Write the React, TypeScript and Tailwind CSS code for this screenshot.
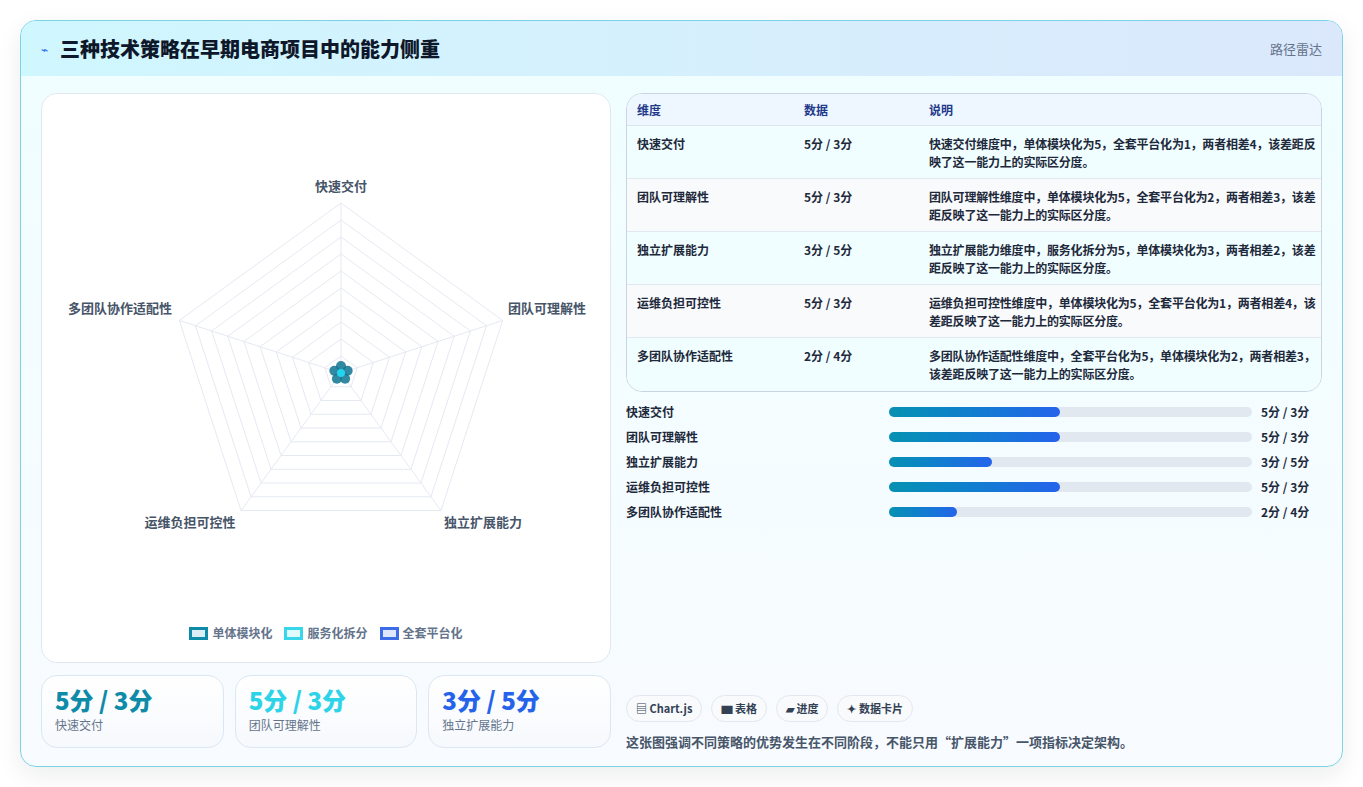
import React from "react";

const rows = [
  { k: "快速交付", v: "5分 / 3分", d: "快速交付维度中，单体模块化为5，全套平台化为1，两者相差4，该差距反映了这一能力上的实际区分度。", w: 47 },
  { k: "团队可理解性", v: "5分 / 3分", d: "团队可理解性维度中，单体模块化为5，全套平台化为2，两者相差3，该差距反映了这一能力上的实际区分度。", w: 47 },
  { k: "独立扩展能力", v: "3分 / 5分", d: "独立扩展能力维度中，服务化拆分为5，单体模块化为3，两者相差2，该差距反映了这一能力上的实际区分度。", w: 28.3 },
  { k: "运维负担可控性", v: "5分 / 3分", d: "运维负担可控性维度中，单体模块化为5，全套平台化为1，两者相差4，该差距反映了这一能力上的实际区分度。", w: 47 },
  { k: "多团队协作适配性", v: "2分 / 4分", d: "多团队协作适配性维度中，全套平台化为5，单体模块化为2，两者相差3，该差距反映了这一能力上的实际区分度。", w: 18.7 },
];

function Radar() {
  const cx = 299, cy = 279, R = 170;
  const pt = (i: number, r: number) => {
    const a = -Math.PI / 2 + (i * 2 * Math.PI) / 5;
    return [cx + r * Math.cos(a), cy + r * Math.sin(a)];
  };
  const rings = Array.from({ length: 10 }, (_, j) => ((j + 1) * R) / 10);
  const poly = (r: number) => [0, 1, 2, 3, 4].map((i) => pt(i, r).join(",")).join(" ");
  const labels = ["快速交付", "团队可理解性", "独立扩展能力", "运维负担可控性", "多团队协作适配性"];
  const lp = [
    [cx, 97, "middle"],
    [466, 219, "start"],
    [441, 433, "middle"],
    [148, 433, "middle"],
    [78, 219, "middle"],
  ] as const;
  return (
    <svg width="570" height="530" className="block">
      {rings.map((r) => (
        <polygon key={r} points={poly(r)} fill="none" stroke="#e5e9f2" strokeWidth="1" />
      ))}
      {[0, 1, 2, 3, 4].map((i) => {
        const [x, y] = pt(i, R);
        return <line key={i} x1={cx} y1={cy} x2={x} y2={y} stroke="#e5e9f2" />;
      })}
      {[0, 1, 2, 3, 4].map((i) => {
        const [x, y] = pt(i, 7);
        return <circle key={i} cx={x} cy={y} r="5" fill="#0e7490" opacity="0.85" />;
      })}
      <circle cx={cx} cy={cy} r="4" fill="#22d3ee" />
      {labels.map((l, i) => (
        <text key={l} x={lp[i][0]} y={lp[i][1]} textAnchor={lp[i][2]} fontSize="13" fontWeight="700" fill="#475569">
          {l}
        </text>
      ))}
    </svg>
  );
}

export default function App() {
  return (
    <div className="min-h-[787px] w-[1363px] bg-white p-5" style={{ fontFamily: '"Noto Sans CJK SC", "Noto Sans", sans-serif' }}>
      <div className="h-[747px] rounded-2xl border border-[#7dd3e6] overflow-hidden bg-gradient-to-b from-[#effeff] to-[#f8fbff] shadow-[0_8px_24px_rgba(15,23,42,0.08)]">
        <div className="h-[55px] flex items-center justify-between px-5 bg-gradient-to-r from-[#cff7fe] to-[#dbe8fc]">
          <div className="flex items-center gap-3">
            <span className="text-[#2563eb] text-xs">⌁</span>
            <span className="text-[20px] font-black text-[#0f172a]">三种技术策略在早期电商项目中的能力侧重</span>
          </div>
          <span className="text-[13px] text-[#64748b]">路径雷达</span>
        </div>
        <div className="flex gap-[15px] px-5 pt-[17px]">
          <div className="w-[570px] flex flex-col gap-[12px]">
            <div className="h-[570px] rounded-2xl border border-[#e2e8f0] bg-white flex flex-col">
              <Radar />
              <div className="flex justify-center gap-3 text-[12px] font-bold text-[#64748b]">
                <span className="flex items-center gap-1"><span className="w-[19px] h-[13px] border-[3px] border-[#0e8ba8] bg-[#dbeef5]" />单体模块化</span>
                <span className="flex items-center gap-1"><span className="w-[19px] h-[13px] border-[3px] border-[#38d6ea] bg-[#e0fbfd]" />服务化拆分</span>
                <span className="flex items-center gap-1"><span className="w-[19px] h-[13px] border-[3px] border-[#3b6ee6] bg-[#dde7fd]" />全套平台化</span>
              </div>
            </div>
            <div className="grid grid-cols-3 gap-[11px]">
              {[
                ["5分 / 3分", "text-[#0e8ba8]", "快速交付"],
                ["5分 / 3分", "text-[#2dd4e8]", "团队可理解性"],
                ["3分 / 5分", "text-[#2563eb]", "独立扩展能力"],
              ].map(([v, c, l]) => (
                <div key={l} className="h-[73px] rounded-2xl border border-[#dbe7f3] bg-gradient-to-b from-white to-[#f6f9fd] px-[13px] pt-[8px]">
                  <div className={`text-[24px] font-black leading-[32px] ${c}`}>{v}</div>
                  <div className="text-[12px] text-[#64748b]">{l}</div>
                </div>
              ))}
            </div>
          </div>
          <div className="flex-1 flex flex-col">
            <div className="rounded-2xl border border-[#cbd5e1] overflow-hidden bg-white">
              <div className="grid grid-cols-[167px_125px_1fr] h-[32px] items-center bg-[#eef6ff] text-[12px] font-bold text-[#1e3a8a] px-[10px] border-b border-[#dbe4ef]">
                <span>维度</span><span>数据</span><span>说明</span>
              </div>
              {rows.map((r, i) => (
                <div key={r.k} className={`grid grid-cols-[167px_125px_1fr] h-[53px] pt-[9px] text-[12px] font-semibold text-[#1e293b] pl-[10px] pr-[4px] ${i < 4 ? "border-b border-[#e2e8f0]" : ""} ${i % 2 ? "bg-[#f8fafc]" : "bg-[#f0feff]"}`}>
                  <span>{r.k}</span><span>{r.v}</span><span className="leading-[18px] tracking-[-0.2px]">{r.d}</span>
                </div>
              ))}
            </div>
            <div className="flex flex-col gap-[11px] mt-[13px]">
              {rows.map((r) => (
                <div key={r.k} className="flex items-center h-[14px] text-[12px] font-semibold text-[#1e293b]">
                  <span className="w-[263px]">{r.k}</span>
                  <div className="w-[363px] h-[10px] rounded-full bg-[#e2e8f0]">
                    <div className="h-full rounded-full bg-gradient-to-r from-[#0891b2] to-[#2563eb]" style={{ width: `${r.w}%` }} />
                  </div>
                  <span className="ml-[9px] font-bold">{r.v}</span>
                </div>
              ))}
            </div>
            <div className="flex gap-[9px] mt-[176px]">
              {["▤ Chart.js", "▆ 表格", "▰ 进度", "✦ 数据卡片"].map((c) => (
                <span key={c} className="h-[27px] px-[9px] flex items-center rounded-full border border-[#e2e8f0] bg-[#f8fafc] text-[11px] font-bold text-[#334155]">{c}</span>
              ))}
            </div>
            <div className="mt-[10px] text-[13px] font-semibold text-[#475569]">这张图强调不同策略的优势发生在不同阶段，不能只用“扩展能力”一项指标决定架构。</div>
          </div>
        </div>
      </div>
    </div>
  );
}
